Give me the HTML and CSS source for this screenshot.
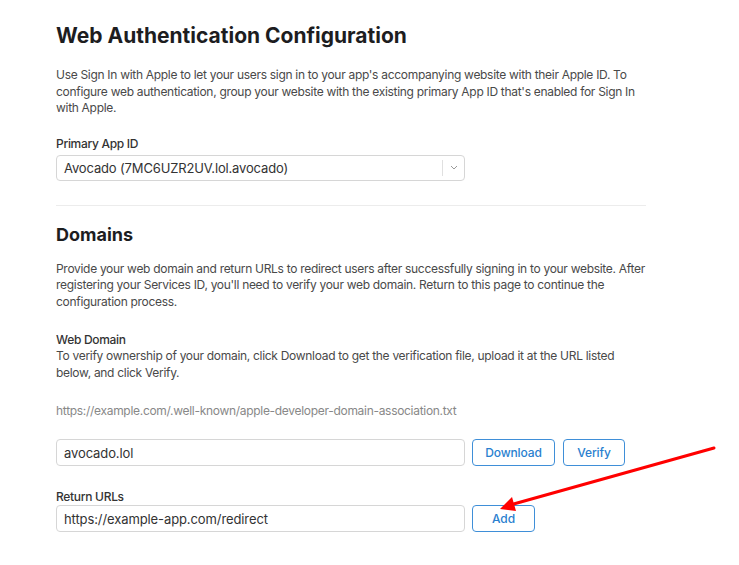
FILE: index.html
```html
<!DOCTYPE html>
<html lang="en">
<head>
    <meta charset="UTF-8">
    <meta name="viewport" content="width=device-width, initial-scale=1.0">
    <title>Web Authentication Configuration</title>
    <link rel="stylesheet" href="styles.css">
</head>
<body>
    <div class="page">
        <!-- Primary App ID section -->
        <section class="section">
            <h1>Web Authentication Configuration</h1>
            <p class="intro">Use Sign In with Apple to let your users sign in to your app's accompanying website with their Apple ID. To configure web authentication, group your website with the existing primary App ID that's enabled for Sign In with Apple.</p>

            <label class="field-label">Primary App ID</label>
            <div class="select">
                <span class="select-value">Avocado (7MC6UZR2UV.lol.avocado)</span>
                <span class="select-arrow">
                    <svg width="8" height="5" viewBox="0 0 8 5"><path d="M1 1 L4 4 L7 1" fill="none" stroke="#9a9a9a" stroke-width="1"/></svg>
                </span>
            </div>
        </section>

        <hr class="divider">

        <!-- Domains section -->
        <section class="section">
            <h2>Domains</h2>
            <p class="intro domains-intro">Provide your web domain and return URLs to redirect users after successfully signing in to your website. After registering your Services ID, you'll need to verify your web domain. Return to this page to continue the configuration process.</p>

            <div class="field-label tight">Web Domain</div>
            <p class="help">To verify ownership of your domain, click Download to get the verification file, upload it at the URL listed below, and click Verify.</p>
            <p class="file-url">https://example.com/.well-known/apple-developer-domain-association.txt</p>

            <div class="input-row">
                <input class="text-input" type="text" value="avocado.lol">
                <button class="btn btn-download">Download</button>
                <button class="btn btn-verify">Verify</button>
            </div>

            <label class="field-label tight return-label">Return URLs</label>
            <div class="input-row">
                <input class="text-input" type="text" value="https://example-app.com/redirect">
                <button class="btn btn-add">Add</button>
            </div>
        </section>
    </div>

    <!-- annotation arrow drawn over the screenshot -->
    <svg class="arrow" width="739" height="565" viewBox="0 0 739 565">
        <line x1="714" y1="448" x2="510" y2="505" stroke="#f00" stroke-width="3" stroke-linecap="round"/>
        <polygon points="500,509 512,497 516,511" fill="#f00"/>
    </svg>
</body>
</html>
```

FILE: styles.css
```css
/* Sign In with Apple configuration page */
body {
    font-family: Inter, "Liberation Sans", Arial, sans-serif;
    background-color: #fff;
    color: #333;
    margin: 0;
    letter-spacing: -0.3px;
}

.page {
    width: 590px;
    padding: 22px 0 0 56px;
}

h1 {
    font-size: 21px;
    font-weight: 700;
    color: #1d1d1f;
    margin: 0 0 17px;
    line-height: 28px;
    letter-spacing: 0;
}

h2 {
    font-size: 18px;
    font-weight: 700;
    color: #1d1d1f;
    margin: 0 0 14px;
    line-height: 24px;
    letter-spacing: 0;
}

.intro {
    font-size: 12px;
    line-height: 16.5px;
    color: #494949;
    margin: 0 0 19px;
}

.domains-intro {
    margin-bottom: 22px;
}

.field-label {
    display: block;
    font-size: 12px;
    line-height: 16px;
    color: #333;
    font-weight: 500;
    margin-bottom: 3px;
}

.field-label.tight {
    margin-bottom: 0;
}

.select {
    width: 409px;
    height: 26px;
    box-sizing: border-box;
    border: 1px solid #d6d6d6;
    border-radius: 4px;
    display: flex;
    align-items: center;
}

.select-value {
    flex: 1;
    padding-left: 7px;
    font-size: 13px;
    letter-spacing: -0.15px;
    color: #333;
}

.select-arrow {
    width: 21px;
    height: 16px;
    border-left: 1px solid #e0e0e0;
    display: flex;
    align-items: center;
    justify-content: center;
}

.divider {
    border: 0;
    border-top: 1px solid #ececec;
    margin: 24px 0 17px;
}

.help {
    font-size: 12px;
    line-height: 16.5px;
    color: #494949;
    margin: 0 0 22px;
}

.file-url {
    font-size: 12px;
    line-height: 16px;
    color: #888;
    margin: 0 0 20px;
}

.input-row {
    display: flex;
    gap: 7px;
}

.text-input {
    width: 409px;
    height: 27px;
    box-sizing: border-box;
    border: 1px solid #d6d6d6;
    border-radius: 4px;
    padding: 0 7px;
    font-family: inherit;
    font-size: 13px;
    letter-spacing: -0.1px;
    color: #333;
    margin: 0;
}

.btn {
    height: 27px;
    box-sizing: border-box;
    padding: 0;
    border: 1px solid #3f8fd8;
    border-radius: 4px;
    background: #fff;
    color: #2a7fcf;
    font-family: inherit;
    font-size: 12px;
    font-weight: 500;
    letter-spacing: -0.1px;
    margin: 0;
}

.btn-download {
    width: 83px;
}

.btn-verify {
    width: 62px;
    margin-left: 1px;
}

.btn-add {
    width: 63px;
}

.return-label {
    margin-top: 23px;
}

.arrow {
    position: absolute;
    left: 0;
    top: 0;
    pointer-events: none;
}
```
